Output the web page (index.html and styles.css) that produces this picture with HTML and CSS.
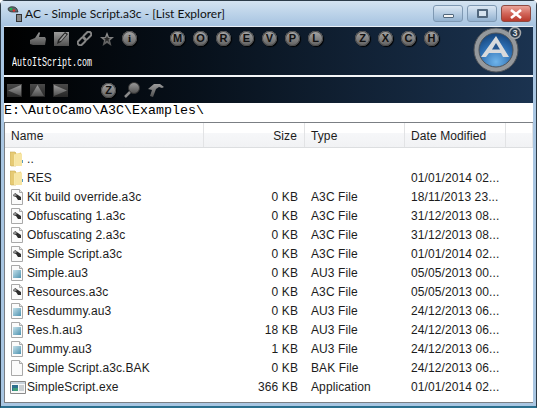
FILE: index.html
```html
<!DOCTYPE html>
<html lang="en">
<head>
    <meta charset="UTF-8">
    <title>AC - Simple Script.a3c - [List Explorer]</title>
    <link rel="stylesheet" href="styles.css">
</head>
<body>
    <svg class="defs" width="0" height="0">
        <defs>
            <linearGradient id="metal" x1="0" y1="0" x2="0" y2="1">
                <stop offset="0" stop-color="#9c9c9c"/>
                <stop offset="1" stop-color="#505050"/>
            </linearGradient>
            <linearGradient id="boxFill" x1="0" y1="0" x2="0" y2="1">
                <stop offset="0" stop-color="#4a4a4a"/>
                <stop offset="1" stop-color="#262626"/>
            </linearGradient>
            <linearGradient id="folderFill" x1="0" y1="0" x2="1" y2="0">
                <stop offset="0" stop-color="#f9ebb0"/>
                <stop offset="1" stop-color="#e6c96c"/>
            </linearGradient>
            <linearGradient id="blueSq" x1="0" y1="0" x2="1" y2="1">
                <stop offset="0" stop-color="#c4e0ea"/>
                <stop offset="1" stop-color="#4f93b0"/>
            </linearGradient>
            <radialGradient id="logoBlue" cx="0.5" cy="0.8" r="0.8">
                <stop offset="0" stop-color="#6fb4ea"/>
                <stop offset="0.55" stop-color="#2b6cb0"/>
                <stop offset="1" stop-color="#123a6c"/>
            </radialGradient>
            <symbol id="folder" viewBox="0 0 14 16">
                <path d="M0 1h5l1 1v13H1l-1-1z" fill="#e6ca74" stroke="#c9ab58" stroke-width=".6"/>
                <path d="M4 3.500l7-2V15H4z" fill="url(#folderFill)"/>
                <path d="M6 2.500h6V15H6z" fill="#f7e5a4"/>
                <path d="M12 9h1v3h-1z" fill="#5b9bbd"/>
            </symbol>
            <symbol id="page" viewBox="0 0 14 16">
                <path d="M1.500.5h8l3 3v12h-11z" fill="#fbfbfb" stroke="#a9a9a9"/>
                <path d="M9.500.5v3h3" fill="#e6e6e6" stroke="#a9a9a9"/>
            </symbol>
            <symbol id="a3c" viewBox="0 0 14 16">
                <use href="#page" width="14" height="16"/>
                <path d="M3 7l2-3 6 4v3H8L6 8z" fill="#2e2e2e"/>
                <path d="M3 5h3.500v2H4z" fill="#8c8c8c"/>
            </symbol>
            <symbol id="au3" viewBox="0 0 14 16">
                <use href="#page" width="14" height="16"/>
                <path d="M3 5h8v8H3z" fill="url(#blueSq)"/>
            </symbol>
            <symbol id="app" viewBox="0 0 16 14">
                <path d="M.5 1.500h15v12H.5z" fill="#f8f8f8" stroke="#8a8a8a"/>
                <path d="M1 2h14v2H1z" fill="#c9d3dd"/>
                <path d="M2 5h6v6H2z" fill="#2d6f8f"/>
                <path d="M3 8h5v3H3z" fill="#3e9c7a"/>
                <path d="M9 6h5M9 8h5M9 10h5" stroke="#9aa5ad"/>
            </symbol>
        </defs>
    </svg>

    <div class="window">
        <!-- Title bar -->
        <div class="titlebar">
            <svg class="app-icon" viewBox="0 0 18 18" width="18" height="18">
                <path d="M1 3.500C3 1 8 1 10 4l1 3H6C3 7 1 6 1 3.500z" fill="#59666e" stroke="#222" stroke-width=".7"/>
                <circle cx="4" cy="4" r="1.300" fill="#27b34a"/>
                <circle cx="7" cy="5.500" r="1.300" fill="#d8332d"/>
                <path d="M9 9h6v8H9z" fill="#333"/>
                <path d="M11 10v6M13 10v6" stroke="#ddd"/>
            </svg>
            <span class="title-text">AC - Simple Script.a3c - [List Explorer]</span>
            <div class="win-btns">
                <div class="win-btn btn-min"><span class="min-glyph"></span></div>
                <div class="win-btn btn-max"><span class="max-glyph"></span></div>
                <div class="win-btn btn-close">
                    <svg viewBox="0 0 14 10" width="14" height="10"><path d="M2 1l10 8M12 1L2 9" stroke="#fff" stroke-width="2.600"/></svg>
                </div>
            </div>
        </div>

        <!-- Main banner -->
        <div class="banner">
            <div class="banner-left">
                <div class="tool-row">
                    <svg class="tool" viewBox="0 0 16 15" width="16" height="15"><path d="M0 9l5-2 4-6 1 1-1 4h6l1 2-1 6H3l-3-1z" fill="url(#metal)"/></svg>
                    <svg class="tool" viewBox="0 0 15 15" width="15" height="15"><path d="M0 1h15v14H0z" fill="url(#metal)"/><path d="M3 13l1-4 7-8 3 2-7 8z" fill="#222"/><path d="M5 10.500l1-2 5-6 1.500 1-5 6z" fill="#999"/></svg>
                    <svg class="tool" viewBox="0 0 15 15" width="15" height="15"><g fill="none" stroke="#858585" stroke-width="2" transform="rotate(-45 7.500 7.500)"><rect x="-1" y="5" width="9" height="5" rx="2.500"/><rect x="7" y="5" width="9" height="5" rx="2.500"/></g></svg>
                    <svg class="tool" viewBox="0 0 14 14" width="14" height="14"><path d="M7 0l2 5h5l-4 3.500 1.500 5.500L7 11l-4.500 3L4 8.500 0 5h5z" fill="url(#metal)"/><path d="M7 4l1 2h2L8.500 7.500 9 10 7 8.500 5 10l.5-2.500L4 6h2z" fill="#2a2a2a"/></svg>
                    <span class="disc disc-info">i</span>
                    <span class="disc disc-first">M</span>
                    <span class="disc">O</span>
                    <span class="disc">R</span>
                    <span class="disc">E</span>
                    <span class="disc">V</span>
                    <span class="disc">P</span>
                    <span class="disc">L</span>
                    <span class="disc disc-group">Z</span>
                    <span class="disc">X</span>
                    <span class="disc">C</span>
                    <span class="disc">H</span>
                </div>
                <div class="site-name">AutoItScript.com</div>
            </div>
            <svg class="logo" viewBox="0 0 52 48" width="52" height="48">
                <circle cx="25" cy="23" r="19.500" fill="url(#logoBlue)" stroke="#94989c" stroke-width="5"/>
                <circle cx="25" cy="23" r="22" fill="none" stroke="#4f5358"/>
                <circle cx="25" cy="23" r="17" fill="none" stroke="#50555a"/>
                <path d="M25 9l13 21h-6l-2-4H18l-3 4H10z" fill="#d8dadc"/>
                <path d="M25 16l4 6.500h-8z" fill="#25568f"/>
                <circle cx="44" cy="6" r="5.500" fill="#2a3a4c" stroke="#a3a6a9" stroke-width="1.500"/>
                <text class="logo-three" x="44" y="9">3</text>
            </svg>
        </div>

        <!-- Navigation bar -->
        <div class="navbar">
            <svg class="nav-arrow" viewBox="0 0 15 13" width="15" height="13"><path d="M0 0h15v13H0z" fill="url(#boxFill)"/><path d="M1 6.500L14 1v11z" fill="url(#metal)"/></svg>
            <svg class="nav-arrow" viewBox="0 0 15 13" width="15" height="13"><path d="M0 0h15v13H0z" fill="url(#boxFill)"/><path d="M7.500 1L14 12H1z" fill="url(#metal)"/></svg>
            <svg class="nav-arrow" viewBox="0 0 15 13" width="15" height="13"><path d="M0 0h15v13H0z" fill="url(#boxFill)"/><path d="M14 6.500L1 1v11z" fill="url(#metal)"/></svg>
            <span class="disc disc-nav">Z</span>
            <svg class="tool" viewBox="0 0 16 16" width="16" height="16"><circle cx="10" cy="6" r="5.500" fill="url(#metal)" stroke="#333"/><path d="M6 10l-5 5" stroke="#8a8a8a" stroke-width="2.500"/></svg>
            <svg class="tool" viewBox="0 0 16 14" width="16" height="14"><path d="M0 6l6-5h6l4 3-2 1-3-1-3 2-3 8-3-1 2-6z" fill="url(#metal)"/></svg>
        </div>

        <div class="path-bar">E:\AutoCamo\A3C\Examples\</div>

        <!-- File list -->
        <div class="list">
            <div class="list-row list-head">
                <div class="cell head-name">Name</div>
                <div class="cell cell-size">Size</div>
                <div class="cell cell-type">Type</div>
                <div class="cell cell-date">Date Modified</div>
                <div class="cell"></div>
            </div>
            <div class="list-row">
                <div class="cell cell-name"><svg class="file-icon"><use href="#folder"/></svg>..</div>
                <div class="cell cell-size"></div><div class="cell cell-type"></div><div class="cell cell-date"></div>
            </div>
            <div class="list-row">
                <div class="cell cell-name"><svg class="file-icon"><use href="#folder"/></svg>RES</div>
                <div class="cell cell-size"></div><div class="cell cell-type"></div><div class="cell cell-date">01/01/2014 02...</div>
            </div>
            <div class="list-row">
                <div class="cell cell-name"><svg class="file-icon"><use href="#a3c"/></svg>Kit build override.a3c</div>
                <div class="cell cell-size">0 KB</div><div class="cell cell-type">A3C File</div><div class="cell cell-date">18/11/2013 23...</div>
            </div>
            <div class="list-row">
                <div class="cell cell-name"><svg class="file-icon"><use href="#a3c"/></svg>Obfuscating 1.a3c</div>
                <div class="cell cell-size">0 KB</div><div class="cell cell-type">A3C File</div><div class="cell cell-date">31/12/2013 08...</div>
            </div>
            <div class="list-row">
                <div class="cell cell-name"><svg class="file-icon"><use href="#a3c"/></svg>Obfuscating 2.a3c</div>
                <div class="cell cell-size">0 KB</div><div class="cell cell-type">A3C File</div><div class="cell cell-date">31/12/2013 08...</div>
            </div>
            <div class="list-row">
                <div class="cell cell-name"><svg class="file-icon"><use href="#a3c"/></svg>Simple Script.a3c</div>
                <div class="cell cell-size">0 KB</div><div class="cell cell-type">A3C File</div><div class="cell cell-date">01/01/2014 02...</div>
            </div>
            <div class="list-row">
                <div class="cell cell-name"><svg class="file-icon"><use href="#au3"/></svg>Simple.au3</div>
                <div class="cell cell-size">0 KB</div><div class="cell cell-type">AU3 File</div><div class="cell cell-date">05/05/2013 00...</div>
            </div>
            <div class="list-row">
                <div class="cell cell-name"><svg class="file-icon"><use href="#a3c"/></svg>Resources.a3c</div>
                <div class="cell cell-size">0 KB</div><div class="cell cell-type">A3C File</div><div class="cell cell-date">05/05/2013 00...</div>
            </div>
            <div class="list-row">
                <div class="cell cell-name"><svg class="file-icon"><use href="#au3"/></svg>Resdummy.au3</div>
                <div class="cell cell-size">0 KB</div><div class="cell cell-type">AU3 File</div><div class="cell cell-date">24/12/2013 06...</div>
            </div>
            <div class="list-row">
                <div class="cell cell-name"><svg class="file-icon"><use href="#au3"/></svg>Res.h.au3</div>
                <div class="cell cell-size">18 KB</div><div class="cell cell-type">AU3 File</div><div class="cell cell-date">24/12/2013 06...</div>
            </div>
            <div class="list-row">
                <div class="cell cell-name"><svg class="file-icon"><use href="#au3"/></svg>Dummy.au3</div>
                <div class="cell cell-size">1 KB</div><div class="cell cell-type">AU3 File</div><div class="cell cell-date">24/12/2013 06...</div>
            </div>
            <div class="list-row">
                <div class="cell cell-name"><svg class="file-icon"><use href="#page"/></svg>Simple Script.a3c.BAK</div>
                <div class="cell cell-size">0 KB</div><div class="cell cell-type">BAK File</div><div class="cell cell-date">24/12/2013 06...</div>
            </div>
            <div class="list-row">
                <div class="cell cell-name"><svg class="file-icon file-icon-app"><use href="#app"/></svg>SimpleScript.exe</div>
                <div class="cell cell-size">366 KB</div><div class="cell cell-type">Application</div><div class="cell cell-date">01/01/2014 02...</div>
            </div>
        </div>
    </div>
</body>
</html>
```

FILE: styles.css
```css
html, body {
    margin: 0;
    padding: 0;
}

body {
    width: 537px;
    height: 408px;
    overflow: hidden;
    font-family: "Liberation Sans", Arial, sans-serif;
    font-size: 12px;
    letter-spacing: 0.1px;
    color: #1c1c1c;
}

.defs {
    display: block;
    height: 0;
}

.window {
    box-sizing: border-box;
    width: 537px;
    height: 408px;
    display: flex;
    flex-direction: column;
    padding: 0 3px 3px 3px;
    background: #a9c6e2;
    border: 1px solid #2c3b48;
    border-bottom: 2px solid #2b6f8e;
    border-radius: 5px 5px 0 0;
}

/* title bar */
.titlebar {
    height: 25px;
    margin: 0 -3px;
    padding-left: 6px;
    display: flex;
    align-items: center;
    background: linear-gradient(to bottom, #d4e3f1 0%, #bcd3e9 50%, #a6c3e0 100%);
    flex-shrink: 0;
}

.app-icon {
    margin-right: 0;
}

.title-text {
    font-family: Lato, sans-serif;
    font-size: 12px;
    letter-spacing: 0;
    color: #111;
}

.win-btns {
    margin-left: auto;
    margin-right: 5px;
    display: flex;
    gap: 4px;
}

.win-btn {
    box-sizing: border-box;
    height: 17px;
    width: 30px;
    border: 1px solid #7f99b3;
    border-radius: 3px;
    display: flex;
    align-items: center;
    justify-content: center;
    background: linear-gradient(to bottom, #dbe7f3 0%, #b7cde3 50%, #93b2d0 100%);
}

.btn-close {
    border-color: #8e4a42;
    background: linear-gradient(to bottom, #e9a49a 0%, #d2665a 50%, #b8392c 100%);
}

.min-glyph {
    display: block;
    width: 11px;
    height: 4px;
    margin-top: 5px;
    background: #f4f4f4;
    border: 1px solid #51677d;
    border-radius: 1px;
    box-sizing: border-box;
}

.max-glyph {
    display: block;
    width: 11px;
    height: 9px;
    box-sizing: border-box;
    border: 2px solid #51677d;
    border-radius: 1px;
    background: #d6e3ef;
}

/* dark toolbars */
.banner {
    height: 48px;
    flex-shrink: 0;
    display: flex;
    justify-content: space-between;
    background: linear-gradient(to right, #000 0%, #07101a 35%, #1b3350 100%);
    border-top: 1px solid #e9f0f7;
    border-bottom: 2px solid #f4f6f8;
}

.banner-left {
    display: flex;
    flex-direction: column;
}

.tool-row {
    display: flex;
    align-items: center;
    gap: 8px;
    padding: 4px 0 0 26px;
}

.disc {
    width: 15px;
    height: 15px;
    border-radius: 50%;
    background: linear-gradient(to bottom, #a8a8a8, #5f5f5f);
    box-shadow: inset 0 0 0 1px #4a4a4a, 1px 1px 1px #000;
    color: #111;
    font-family: "Liberation Sans", sans-serif;
    font-size: 11px;
    font-weight: bold;
    letter-spacing: 0;
    line-height: 15px;
    text-align: center;
    flex-shrink: 0;
}

.disc-first {
    margin-left: 25px;
}

.disc-group {
    margin-left: 24px;
}

.disc-info {
    font-family: "Liberation Serif", serif;
}

.site-name {
    margin: 10px 0 0 8px;
    font-family: "Liberation Mono", monospace;
    font-size: 13px;
    letter-spacing: 0;
    line-height: 14px;
    color: #fff;
    white-space: nowrap;
    transform: scaleX(0.64);
    transform-origin: left center;
}

.logo {
    margin-right: 10px;
}

.logo-three {
    font-family: "Liberation Sans", sans-serif;
    font-size: 9px;
    font-weight: bold;
    fill: #ddd;
    text-anchor: middle;
}

.navbar {
    height: 26px;
    flex-shrink: 0;
    display: flex;
    align-items: center;
    gap: 8px;
    padding-left: 3px;
    background: linear-gradient(to right, #000 0%, #07101a 35%, #1b3350 100%);
}

.disc-nav {
    margin-left: 25px;
}

.path-bar {
    height: 19px;
    flex-shrink: 0;
    background: #fff;
    font-family: "Liberation Mono", monospace;
    font-size: 13.33px;
    letter-spacing: 0;
    line-height: 15px;
    color: #000;
    border-bottom: 1px solid #7b7f84;
}

/* file list */
.list {
    flex: 1;
    background: #fff;
    border-left: 1px solid #7b7f84;
    border-bottom: 1px solid #7b7f84;
    min-height: 0;
}

.list-row {
    display: grid;
    grid-template-columns: 199px 101px 100px 101px 1fr;
    height: 19px;
    align-items: center;
}

.list-head {
    height: 24px;
    margin-bottom: 1px;
    align-items: stretch;
    background: linear-gradient(to bottom, #fff 0%, #fff 40%, #f6f7f9 42%, #f1f2f4 100%);
    border-bottom: 1px solid #dcdee0;
}

.list-head .cell {
    line-height: 27px;
    border-right: 1px solid #e2e3e5;
}

.cell {
    white-space: nowrap;
    overflow: hidden;
}

.head-name {
    padding-left: 6px;
}

.cell-name {
    display: flex;
    align-items: center;
    padding-left: 5px;
}

.cell-size {
    text-align: right;
    padding-right: 7px;
}

.cell-type {
    padding-left: 6px;
}

.cell-date {
    padding-left: 6px;
}

.file-icon {
    width: 14px;
    height: 16px;
    margin-right: 3px;
    flex-shrink: 0;
}

.file-icon-app {
    width: 16px;
    height: 14px;
    margin-right: 1px;
}
```
